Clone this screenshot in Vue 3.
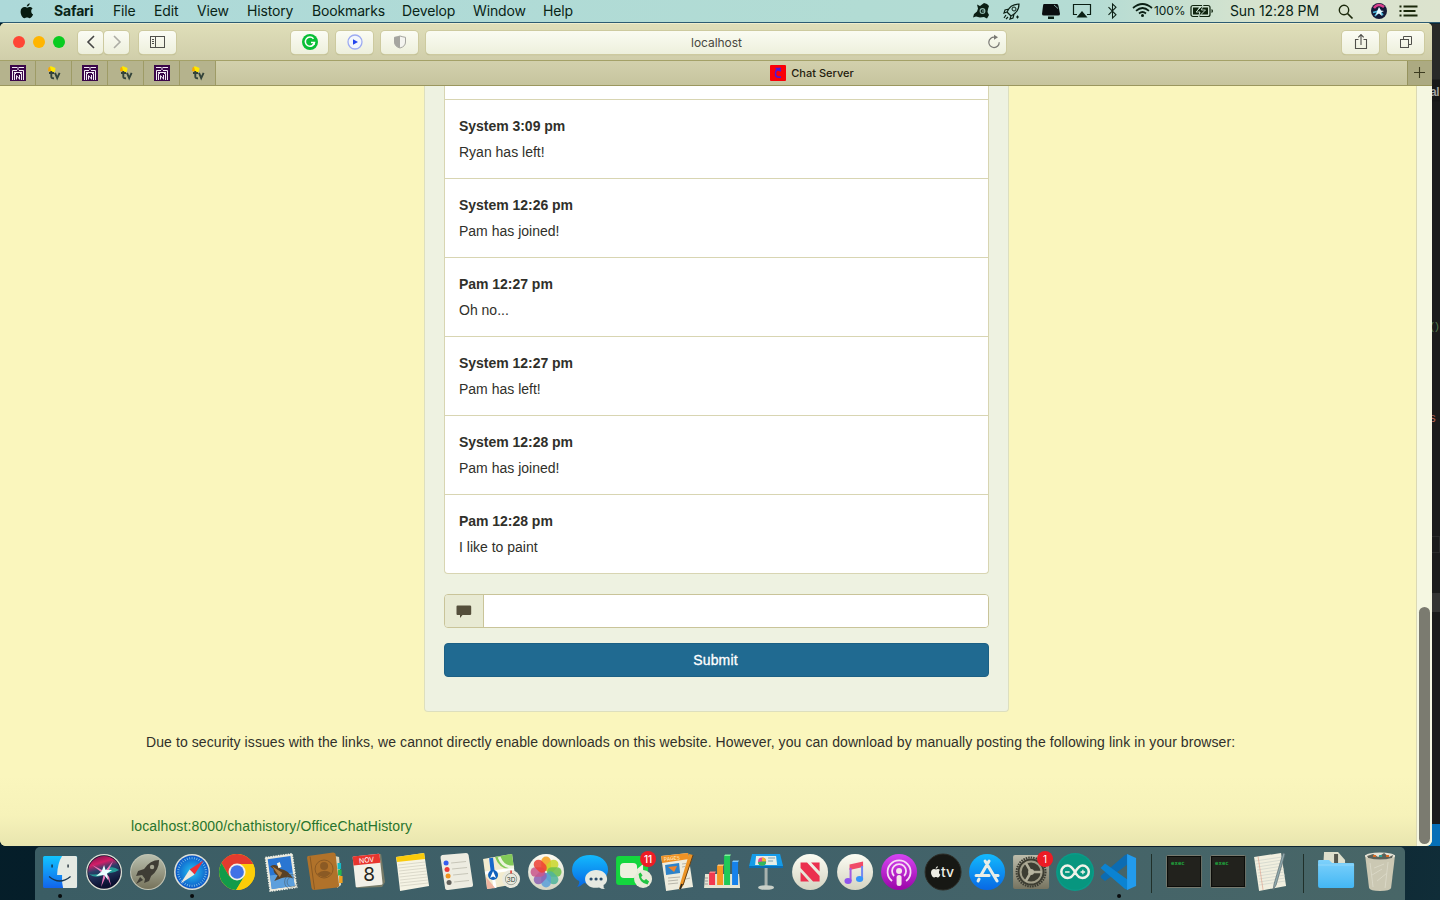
<script setup>
const menus = [
  { label: 'Safari', slot: 59, bold: true },
  { label: 'File', slot: 41 },
  { label: 'Edit', slot: 43 },
  { label: 'View', slot: 50 },
  { label: 'History', slot: 65 },
  { label: 'Bookmarks', slot: 90 },
  { label: 'Develop', slot: 71 },
  { label: 'Window', slot: 70 },
  { label: 'Help', slot: 50 },
]
const messages = [
  { who: 'System', time: '3:09 pm', text: 'Ryan has left!' },
  { who: 'System', time: '12:26 pm', text: 'Pam has joined!' },
  { who: 'Pam', time: '12:27 pm', text: 'Oh no...' },
  { who: 'System', time: '12:27 pm', text: 'Pam has left!' },
  { who: 'System', time: '12:28 pm', text: 'Pam has joined!' },
  { who: 'Pam', time: '12:28 pm', text: 'I like to paint' },
]
const pins = ['maze', 'tv', 'maze', 'tv', 'maze', 'tv']
const petals = ['#f5a01c', '#c9d62b', '#6cc04a', '#4fb59b', '#5c9fd8', '#8d62b5', '#c9578c', '#ee4136']
const ticks = Array.from({ length: 36 }, (_, i) => i * 10)
</script>

<template>
  <div class="desktop">
    <header class="menubar">
      <svg class="apple" width="14" height="16" viewBox="0 0 14 16"><path d="M9.700.200C9.800 1.800 8.400 3.600 6.800 3.600 6.600 2 8.100.400 9.700.200ZM11.200 7.900C11.200 6.400 12.300 5.600 12.600 5.400 11.700 4.200 10.500 4 9.900 4 8.700 4 7.800 4.700 7.200 4.700 6.600 4.700 5.700 4.100 4.600 4.100 2.500 4.100.6 5.700.6 8.700.6 11.800 2.700 15.200 4.500 15.200 5.400 15.200 5.900 14.600 7.100 14.600 8.300 14.600 8.600 15.200 9.600 15.200 11.200 15.200 12.700 12.800 13.100 11.300 12 10.900 11.200 9.600 11.200 7.900Z" fill="#071b10"/></svg>
      <nav class="menus">
        <span v-for="m in menus" :key="m.label" :class="{ bold: m.bold }" :style="{ width: m.slot + 'px' }">{{ m.label }}</span>
      </nav>
      <svg class="tray" width="240" height="22" viewBox="0 0 240 22" fill="none" stroke="#0b1f14">
        <!-- cat-shaped utility, rocket, display -->
        <path d="M8 4.500 11 6 15 3 18 4 20 6 19 9 18.500 12 20 15 18 18.500 15 17 11 17.500 7 16.500 4 17.500 5 14 8 11.500 9 8.500Z" fill="#0b1f14" stroke="none"/>
        <circle cx="13.500" cy="11" r="2.400" stroke="#8fb8ae" stroke-width="1.100"/><path d="M13 11h3" stroke="#8fb8ae"/>
        <g transform="translate(34 3)"><path d="M4 9C6 4 10 1 16 1 16 7 12 11 8 13ZM6 6 2 7 1 10 4 9M11 11 10 15 7 16 8 13M3 12 1 15M5 14 3 16" stroke-width="1.200"/><circle cx="11" cy="6" r="2"/></g>
        <path d="M48.500 15.500v3M47 17h3"/>
        <path d="M75 4H88Q89 4 89.500 6L91 14Q91 15.500 89 15.500H75Q73 15.500 73 14L74 6Q74 4 75 4Z" fill="#0b0e10" stroke="none"/><path d="M79 16.500H85V19H79Z" fill="#0b1f14" stroke="none"/><path d="M85 5 89 8.500" stroke="#86aaa5"/>
        <path d="M108 14.500H104.500V4.500H121.500V14.500H118" stroke-width="1.200"/><path d="M113 11 118.500 17.500H107.500Z" fill="#0b1f14" stroke="none"/>
        <path d="M139.500 7.200 147 14.800 143.500 18V4L147 7.200 139.500 14.800" stroke-width="1.050"/>
        <g stroke-width="1.700"><path d="M164 8Q173.500 0 183 8M167 10.800Q173.500 5.200 180 10.800M170 13.500Q173.500 10.500 177 13.500"/></g><circle cx="173.500" cy="15.500" r="1.500" fill="#0b1f14" stroke="none"/>
      </svg>
      <span class="percent">100%</span>
      <svg class="battery" width="24" height="14" viewBox="0 0 24 14"><rect x="1" y="1.500" width="19" height="11" rx="2" fill="none" stroke="#10240f" stroke-width="1.200"/><path d="M3 3.500H9L6 8H9V10.500H3ZM12 3.500H18V10.500H11L15 6H12Z" fill="#10240f"/><path d="M13 1 6 8H10L8.500 13 15.500 6H11.500Z" fill="#10240f" stroke="#c8dfd0" stroke-width=".9"/><path d="M21.500 5V9Q23 8.500 23 7T21.500 5" fill="#10240f"/></svg>
      <span class="clock">Sun 12:28 PM</span>
      <svg class="right-tray" width="90" height="22" viewBox="0 0 90 22" fill="none" stroke="#1b280b">
        <circle cx="14" cy="10" r="4.700" stroke-width="1.400"/><path d="M17.500 13.500 22.500 18.500" stroke-width="1.700"/>
        <circle cx="49" cy="11" r="8" fill="#141a38" stroke="none"/><path d="M44 8Q48 2.500 54 7" stroke="#d8408c" stroke-width="2.500"/><path d="M43 12.500 49 11 45 16M49 11 53 15" stroke="#49b9dc" stroke-width="1.800"/><path d="M49 7 51 10.500 54 11 51 12.500 52 16 49 13.500 46 15 47 11.500Z" fill="#e5faff" stroke="none"/>
        <g stroke-width="1.800"><path d="M73.500 6.500H87.500M73.500 11H85.500M73.500 15.500H87.500"/><path d="M69.500 6.500h2M69.500 11h2M69.500 15.500h2"/></g>
      </svg>
    </header>

    <div class="editor">
      <span class="ed-tab">al</span><span class="ed-par">()</span><span class="ed-s">s</span>
      <i class="ed-line"></i><i class="ed-bar"></i><i class="ed-foot"></i>
    </div>

    <main class="window">
      <div class="toolbar">
        <div class="lights"><i class="red"></i><i class="amber"></i><i class="green"></i></div>
        <div class="btn nav-l"><svg width="24" height="22" viewBox="0 0 24 22"><path d="M15 5 9 11 15 17" fill="none" stroke="#454545" stroke-width="1.600"/></svg></div>
        <div class="btn nav-r"><svg width="24" height="22" viewBox="0 0 24 22"><path d="M9 5 15 11 9 17" fill="none" stroke="#adada5" stroke-width="1.600"/></svg></div>
        <div class="btn side"><svg width="18" height="14" viewBox="0 0 18 14" fill="none" stroke="#50504b"><rect x="1.500" y="1.500" width="14" height="11"/><path d="M6.500 1.500V12.500M3 4.500h2M3 6.500h2M3 8.500h2"/></svg></div>
        <div class="btn gram"><svg width="18" height="18" viewBox="0 0 18 18"><circle cx="9" cy="9" r="8" fill="#08bf36"/><path d="M12.500 5.700A4.600 4.600 0 1 0 13.500 9.500H10" fill="none" stroke="#fff" stroke-width="1.500"/><path d="M11 11.500 13.600 9.200V12" fill="#fff"/></svg></div>
        <div class="btn play"><svg width="18" height="18" viewBox="0 0 18 18"><circle cx="9" cy="9" r="7" fill="#f2f6fb" stroke="#9dabf2" stroke-width="1.300"/><path d="M7 6.200 12 9 7 11.800Z" fill="#2344ed"/></svg></div>
        <div class="btn shield"><svg width="14" height="16" viewBox="0 0 14 16"><path d="M7 2Q10 3 12.500 3.300V8Q12.500 12.500 7 14Q1.500 12.500 1.500 8V3.300Q4 3 7 2Z" fill="#f4f4f0" stroke="#a5a5a0"/><path d="M7 2Q4 3 1.500 3.300V8Q1.500 12.500 7 14Z" fill="#a5a5a0"/></svg></div>
        <div class="address"><span>localhost</span><svg width="16" height="16" viewBox="0 0 16 16"><path d="M8.500 3.200A5.200 5.200 0 1 0 13.200 8.200" fill="none" stroke="#797974" stroke-width="1.200"/><path d="M8 .800 12 3.300 8 5.800Z" fill="#797974"/></svg></div>
        <div class="btn share"><svg width="14" height="18" viewBox="0 0 14 18" fill="none" stroke="#50504b" stroke-width="1.100"><path d="M4.500 6.500H1.500V15.500H12.500V6.500H9.500M7 12V1.500M4.300 4.300 7 1.500 9.700 4.300"/></svg></div>
        <div class="btn tabs"><svg width="14" height="14" viewBox="0 0 14 14" fill="none" stroke="#50504b"><rect x="1.500" y="4.500" width="8" height="8"/><path d="M4.500 4V1.500H12.500V9.500H10"/></svg></div>
      </div>
      <div class="tabbar">
        <div v-for="(p, i) in pins" :key="i" class="pin">
          <svg v-if="p === 'maze'" width="16" height="16" viewBox="0 0 16 16"><rect width="16" height="16" fill="#3a064a"/><path d="M2 2.500H7M9 2.500H14M8 2V5M2.500 15V5.500H7M13.500 15V5.500H9M4.500 15V8.500H6M11.500 15V8.500H10M4 7.500H12M6.500 14.500V10.500M6.500 10.500 9.500 14M9.500 10V14.500" fill="none" stroke="#f2eaf4"/></svg>
          <svg v-else class="tvfav" width="16" height="18" viewBox="0 0 16 18"><path d="M4.500 2 9.500 4 9 7.500 6 8.500 3 6Z" fill="#ffe800"/><path d="M2.500 3.500 4 3 5.500 8 2 7Z" fill="#f7a900"/><path d="M5.300 7V12.500Q5.300 14.700 8 14.200M3 9H8M9 8.800 11.200 14.200 13.600 8.800" fill="none" stroke="#34443b" stroke-width="1.900"/></svg>
        </div>
        <div class="active-tab">
          <svg width="16" height="16" viewBox="0 0 16 16"><rect width="16" height="16" rx="1" fill="#fa0008"/><path d="M11 6Q6 3 5.500 8T11 12M5.500 3.500H11" fill="none" stroke="#4c18d8" stroke-width="1.600"/></svg>
          <span>Chat Server</span>
        </div>
        <div class="plus"><svg width="12" height="12" viewBox="0 0 12 12"><path d="M5.500 0V11M0 5.500H11" stroke="#3c3b20" stroke-width="1.100"/></svg></div>
      </div>
      <div class="viewport">
        <section class="page">
          <div class="well">
            <ul class="list">
              <li class="cut"></li>
              <li v-for="(m, i) in messages" :key="i"><h4>{{ m.who }} {{ m.time }}</h4><p>{{ m.text }}</p></li>
            </ul>
            <div class="field">
              <div class="addon"><svg width="16" height="14" viewBox="0 0 16 14"><path d="M1.500.500H14Q15.200.500 15.200 1.500V9Q15.200 10 14 10H6.500L4 13V10H1.500Q.500 10 .500 9V1.500Q.500.500 1.500.500Z" fill="#554f3b"/></svg></div>
              <div class="input"></div>
            </div>
            <button class="submit">Submit</button>
          </div>
          <p class="note">Due to security issues with the links, we cannot directly enable downloads on this website. However, you can download by manually posting the following link in your browser:</p>
          <p class="link">localhost:8000/chathistory/OfficeChatHistory</p>
        </section>
        <div class="track"><i></i></div>
      </div>
    </main>

    <footer class="dock">
      <svg width="0" height="0" class="defs">
        <defs>
          <linearGradient id="finder" x2="0" y2="1"><stop stop-color="#12c5ff"/><stop offset="1" stop-color="#1264ec"/></linearGradient>
          <linearGradient id="ivory" x2="0" y2="1"><stop stop-color="#fcfcf3"/><stop offset="1" stop-color="#d5d4c2"/></linearGradient>
          <linearGradient id="rock" x2="0" y2="1"><stop stop-color="#b9bfae"/><stop offset="1" stop-color="#76735b"/></linearGradient>
          <linearGradient id="blue" x2="0" y2="1"><stop stop-color="#13bafd"/><stop offset="1" stop-color="#0868e5"/></linearGradient>
          <radialGradient id="compass"><stop stop-color="#27c4f2"/><stop offset="1" stop-color="#0b58c8"/></radialGradient>
          <linearGradient id="siri" x2=".3" y2="1"><stop stop-color="#6c1145"/><stop offset=".3" stop-color="#d31e68"/><stop offset=".5" stop-color="#2b3f6a"/><stop offset="1" stop-color="#0a1030"/></linearGradient>
          <linearGradient id="purple" x2="0" y2="1"><stop stop-color="#d645f2"/><stop offset="1" stop-color="#9b05a8"/></linearGradient>
          <linearGradient id="metal" x2="0" y2="1"><stop stop-color="#bcbcab"/><stop offset="1" stop-color="#777460"/></linearGradient>
          <linearGradient id="folder" x2="0" y2="1"><stop stop-color="#7ed1fb"/><stop offset="1" stop-color="#43b7f4"/></linearGradient>
        </defs>
      </svg>
      <!-- Finder -->
      <svg class="app" viewBox="0 0 44 44"><rect x="5" y="6" width="34" height="32" rx="1.500" fill="url(#finder)"/><path d="M24 6H37.500Q39 6 39 7.500V36.500Q39 38 37.500 38H25Q23.500 32 24 25H19Q19.500 13 24 6Z" fill="#e5eae3"/><path d="M14 14.500v3M30 14.500v3" stroke="#15252e" stroke-width="1.300"/><path d="M11 26.500Q21.500 35.500 32.500 26.500" fill="none" stroke="#17344d" stroke-width="1.300"/><circle cx="22" cy="46" r="2" fill="#080c0d"/></svg>
      <!-- Siri -->
      <svg class="app" viewBox="0 0 44 44"><circle cx="22" cy="22" r="18" fill="#dce0d5"/><circle cx="22" cy="22" r="16.700" fill="#100d2b"/><circle cx="22" cy="22" r="16" fill="url(#siri)"/><path d="M7 24Q16 26 22 21Q29 14 37 20Q31 24 24 23Q14 30 7 24Z" fill="#26c6b0" opacity=".7"/><path d="M22 22 19 37 23 28ZM23 22 29 36 27 27ZM22 21 10 15 19 22ZM23 21 31 11 26 22Z" fill="#f07ebc"/><path d="M22 15 23.500 20 30 20 25 23.500 26 30 22 25 14 26 19.500 21.500Z" fill="#eaffff"/></svg>
      <!-- Launchpad -->
      <svg class="app" viewBox="0 0 44 44"><circle cx="22" cy="22" r="18" fill="#c3c5b5"/><circle cx="22" cy="22" r="17" fill="url(#rock)"/><path d="M33 10Q24 10 18 19L12 21 10 26 16 25 19 29 18 33 23 31 25 26Q33 20 33 10ZM14 27 10 34 17 30Z" fill="#3f3d35"/><circle cx="26" cy="17" r="2.200" fill="#a4a491"/></svg>
      <!-- Safari -->
      <svg class="app" viewBox="0 0 44 44"><circle cx="22" cy="22" r="18" fill="#e0e1d7"/><circle cx="22" cy="22" r="16.500" fill="url(#compass)"/><g stroke="#a4d9ef" stroke-width=".6"><path v-for="t in ticks" :key="t" d="M22 7v2.200" :transform="`rotate(${t} 22 22)`"/></g><path d="M33.500 10.500 19.500 19.500 24.500 24.500Z" fill="#ee2f36"/><path d="M10.500 33.500 19.500 19.500 24.500 24.500Z" fill="#ede9df"/><circle cx="22" cy="46" r="2" fill="#080c0d"/></svg>
      <!-- Chrome -->
      <svg class="app" viewBox="0 0 44 44"><circle cx="22" cy="22" r="18" fill="#fccd08"/><path d="M22 22 38 14A18 18 0 0 0 6.400 13L14 26Z" fill="#e33b2e"/><path d="M6.400 13A18 18 0 0 0 21 40L29.500 26 22 30 14 26Z" fill="#129b4a"/><path d="M22 14H38A18 18 0 0 1 21 40L29.500 26Z" fill="#fccd08"/><circle cx="22" cy="22" r="8.500" fill="#f3f1e8"/><circle cx="22" cy="22" r="6.800" fill="#4072e6"/></svg>
      <!-- Mail -->
      <svg class="app" viewBox="0 0 44 44"><g transform="rotate(-8 22 22)"><rect x="8.500" y="5.500" width="27" height="34" fill="#e9e8d9" stroke="#f4f3e9" stroke-dasharray="1.500 1" stroke-width="1.500"/><rect x="10.500" y="7.500" width="23" height="30" fill="#2a76d2"/><path d="M10.500 24H33.500V37.500H10.500Z" fill="#5c9fdc"/><path d="M12 15Q18 12 22 19Q29 21 33 30Q28 27 22 28L14 30 18 25Q14 22 15 18Z" fill="#584025"/><path d="M14 15 23 23 20 27Z" fill="#ae7d42"/><path d="M19 13 22 12 23 17 20 18Z" fill="#fff8df"/></g><g fill="none" stroke="#4b5c66" opacity=".55"><circle cx="33" cy="32" r="7.500"/><circle cx="33" cy="32" r="5"/></g></svg>
      <!-- Contacts -->
      <svg class="app" viewBox="0 0 44 44"><path d="M32 6 36 7 38 35 34 38Z" fill="#d9d6be"/><path d="M34.500 13h3.500v6h-3.500Z" fill="#16b9c5"/><path d="M35 19.500h3.500v6H35Z" fill="#26b64c"/><path d="M36 26h3.500v7H36Z" fill="#f1a01e"/><path d="M5 6 30 2.500Q32 2.500 32.500 4L36 35.500Q36 37 34 37.500L11 40Q9 40 8.500 38L4 8Q4 6 5 6Z" fill="#b0722a"/><path d="M7 6.500 11.500 39.500" stroke="#8b5a22"/><circle cx="21" cy="19" r="9" fill="none" stroke="#8b5a24"/><circle cx="21" cy="16" r="4" fill="#8b5a24"/><path d="M14 24Q21 18 28 23Q21 31 14 24Z" fill="#8b5a24"/></svg>
      <!-- Calendar -->
      <svg class="app" viewBox="0 0 44 44"><path d="M8 9 34 4 38 32 35 37 10 38Z" fill="#777b68"/><g transform="rotate(-6 21 20)"><rect x="7" y="5" width="27" height="31" rx="1" fill="#f2f0e7"/><rect x="7" y="5" width="27" height="9" fill="#e8352e"/><text x="20.500" y="12.500" font-size="7" fill="#fff" text-anchor="middle">NOV</text></g><text x="22" y="30.500" font-size="19" fill="#262620" text-anchor="middle">8</text></svg>
      <!-- Notes -->
      <svg class="app" viewBox="0 0 44 44"><path d="M5 7 33 3 38 36 9 41Z" fill="#f5f3e4"/><path d="M5 7 33 3 34 9 6 12Z" fill="#facb0b"/><path d="M7 15 34 12M7.500 18 34.500 15M8 21 35 18M8 24 35.500 21M8.500 27 36 24M9 30 36.500 27M9 33 37 30M9.500 36 37 33" stroke="#c9c7b8" stroke-width=".6"/></svg>
      <!-- Reminders -->
      <svg class="app" viewBox="0 0 44 44"><path d="M7 5 31 3Q33 3 33.500 5L38 35Q38 37 36 37L13 40Q10 40 10 38L5.500 8Q5 6 7 5Z" fill="#edece1"/><g stroke="#bdbbad" stroke-width=".8"><path d="M16 13 31 11.500M17 19 32 17.500M18 25 33 23.500M19 32 34 30.500"/></g><circle cx="11" cy="13" r="2.500" fill="#365cf0"/><circle cx="12" cy="19.500" r="2.500" fill="#ed3a38"/><circle cx="13" cy="26" r="2.500" fill="#ef941e"/><circle cx="14" cy="32.500" r="2.500" fill="#62615c"/></svg>
      <!-- Maps -->
      <svg class="app" viewBox="0 0 44 44"><path d="M4 9 33 4 37 34 8 39Z" fill="#f2ebce"/><path d="M16 7 33 4 35 20Q20 20 16 7Z" fill="#82ca58"/><path d="M11 8 16 38M6 23 35 19" stroke="#fff" stroke-width="3"/><path d="M7 27 16 38 8 39Z" fill="#efb4a0"/><path d="M12 8 14 25" stroke="#1768ca" stroke-width="4"/><path d="M20 7Q24 18 35 17" stroke="#edf4de" stroke-width="3" fill="none"/><circle cx="14" cy="25" r="5" fill="#0f61bc"/><path d="M14 21 17 28 14 26.500 11 28Z" fill="#fff"/><circle cx="32" cy="29" r="9" fill="#e9e9dd"/><circle cx="32" cy="29" r="5.700" fill="none" stroke="#9fa69b"/><text x="32" y="31.500" font-size="6.500" text-anchor="middle" fill="#31433b">3D</text><path d="M32 20.500v3" stroke="#e03428" stroke-width="1.500"/></svg>
      <!-- Photos -->
      <svg class="app" viewBox="0 0 44 44"><circle cx="22" cy="22" r="18" fill="url(#ivory)"/><rect v-for="(c, i) in petals" :key="c" x="17.200" y="6.500" width="9.600" height="14.500" rx="4.800" :fill="c" opacity=".86" :transform="`rotate(${i * 45} 22 22)`"/></svg>
      <!-- Messages -->
      <svg class="app" viewBox="0 0 44 44"><path d="M22 5C32 5 40 11 40 19.500S32 34 22 34Q19 34 16 33Q13 36 9 37Q12 33 11 31C7 29 4 25 4 20 4 11 12 5 22 5Z" fill="url(#blue)"/><path d="M28 20C35 20 39 24 39 29Q39 33 35.500 35Q35 38 37 39Q33 39 31 37.500C23 39 17 35 17 29 17 24 22 20 28 20Z" fill="#e6eae2"/><g fill="#284c6b"><circle cx="23" cy="29" r="1.600"/><circle cx="28" cy="29" r="1.600"/><circle cx="33" cy="29" r="1.600"/></g></svg>
      <!-- FaceTime -->
      <svg class="app" viewBox="0 0 44 44"><rect x="4" y="6" width="32" height="29" rx="3" fill="#14d63e"/><rect x="8" y="13" width="17" height="15" rx="4" fill="#eef0de"/><path d="M25 19 31 14V28H25Z" fill="#eef0de"/><circle cx="31" cy="29" r="9" fill="#e8ead9"/><path d="M26.500 24Q27 33 35.500 34.500L37 31.500 34 29 32 30.500Q29.500 29 29 27L30.500 25.500 28.500 22.500Z" fill="#21c443"/><circle cx="36" cy="9" r="8" fill="#ed1c25"/><text x="36" y="12.700" font-size="10" font-weight="500" fill="#fff" text-anchor="middle">11</text></svg>
      <!-- Pages -->
      <svg class="app" viewBox="0 0 44 44"><path d="M5 6 32 3 37 37 10 41Z" fill="#eeecdd"/><path d="M5 6 32 3 33 9 6 13Z" fill="#ef9224"/><text x="8" y="11" font-size="5" fill="#fff2d0" transform="rotate(-6 8 11)">PAGES</text><path d="M9 15 23 13 24 23 10 25Z" fill="#2e83c9"/><path d="M12 17 21 16 18 22Z" fill="#ef832b"/><path d="M26 14 30 13.500M26 17 29 16.500M12 28 24 27M12 31 22 30M12 34 22 33M30 29 34 28" stroke="#b8b6aa"/><path d="M33 4 37 5 27 36 23 40 24 34Z" fill="#ec9426"/><path d="M26 34 24 39" stroke="#2f2b20" stroke-width="2"/><path d="M37 5 27 35" stroke="#654015"/></svg>
      <!-- Numbers -->
      <svg class="app" viewBox="0 0 44 44"><path d="M5 24H39L40 38H4Z" fill="#e6e5d4"/><path d="M5 28 8 28M5 31 8 31M4.500 34 8 34" stroke="#999"/><path d="M9 23h6v12H9Z" fill="#f2394f"/><path d="M17 16h6v19h-6Z" fill="#f69722"/><path d="M24 6h6v29h-6Z" fill="#20c957"/><path d="M32 12h6v23h-6Z" fill="#1782eb"/><path d="M9 23l1-1.500h6l-1 1.500Z" fill="#ff7e83"/><path d="M17 16l1-1.500h6l-1 1.500Z" fill="#ffc477"/><path d="M24 6l1-1.500h6l-1 1.500Z" fill="#7ff09b"/><path d="M32 12l1-1.500h6l-1 1.500Z" fill="#7bc8ff"/></svg>
      <!-- Keynote -->
      <svg class="app" viewBox="0 0 44 44"><path d="M20.500 17h3v21h-3Z" fill="#a8b2ae"/><ellipse cx="22" cy="37.500" rx="8" ry="2.300" fill="#c9d0c8"/><path d="M8 4H36L39 16H5Z" fill="#159be8"/><path d="M5 16H39V18H5Z" fill="#0b6eb5"/><path d="M12 6H32L33 15H11Z" fill="#e6eee7"/><circle cx="18" cy="11.500" r="4" fill="#e6489b"/><path d="M18 7.500A4 4 0 0 1 22 11.500H18Z" fill="#efb628"/><path d="M18 11.500H22A4 4 0 0 1 14 12Z" fill="#32b75b"/><path d="M24 8h7M24 11h5" stroke="#799eb0"/></svg>
      <!-- News -->
      <svg class="app" viewBox="0 0 44 44"><circle cx="22" cy="22" r="18" fill="url(#ivory)"/><path d="M12.500 12.500H19L31.500 26V31.500H25L12.500 18ZM23 12.500H31.500V21.500ZM12.500 22 21 31.500H12.500Z" fill="#eb304e"/></svg>
      <!-- Music -->
      <svg class="app" viewBox="0 0 44 44"><circle cx="22" cy="22" r="18" fill="url(#ivory)"/><path d="M16.500 14.500 30 11.500V17L16.500 20Z" fill="#f04b68"/><path d="M17.500 18V31" stroke="#a55ae0" stroke-width="2"/><path d="M29 16V29" stroke="#7388f0" stroke-width="2"/><ellipse cx="15" cy="31" rx="3.600" ry="3" fill="#8f53ee"/><ellipse cx="26.500" cy="29" rx="3.600" ry="3" fill="#3595fa"/></svg>
      <!-- Podcasts -->
      <svg class="app" viewBox="0 0 44 44"><circle cx="22" cy="22" r="18" fill="url(#purple)"/><g fill="none" stroke="#f7def4" stroke-width="1.800"><path d="M15 31A11.500 11.500 0 1 1 29 31M17 26A7 7 0 1 1 27 26"/></g><circle cx="22" cy="21" r="3" fill="#f4e6e9"/><rect x="19.500" y="25" width="5" height="11" rx="2.500" fill="#f4e6e9"/></svg>
      <!-- Apple TV -->
      <svg class="app" viewBox="0 0 44 44"><circle cx="22" cy="22" r="18" fill="#171814" stroke="#2d2d27"/><g transform="translate(9.500 16) scale(.75)"><path d="M9.700.200C9.800 1.800 8.400 3.600 6.800 3.600 6.600 2 8.100.400 9.700.200ZM11.200 7.900C11.200 6.400 12.300 5.600 12.600 5.400 11.700 4.200 10.500 4 9.900 4 8.700 4 7.800 4.700 7.200 4.700 6.600 4.700 5.700 4.100 4.600 4.100 2.500 4.100.6 5.700.6 8.700.6 11.800 2.700 15.200 4.500 15.200 5.400 15.200 5.900 14.600 7.100 14.600 8.300 14.600 8.600 15.200 9.600 15.200 11.200 15.200 12.700 12.800 13.100 11.300 12 10.900 11.200 9.600 11.200 7.900Z" fill="#eeeee5"/></g><text x="20" y="27" font-size="14" font-weight="500" fill="#eeeee5">tv</text></svg>
      <!-- App Store -->
      <svg class="app" viewBox="0 0 44 44"><circle cx="22" cy="22" r="18" fill="url(#blue)"/><g stroke="#e9eee8" stroke-width="3" stroke-linecap="round"><path d="M24 11 16 25M20 11 32 31M11 25.500H24M29 25.500H33M14 29 13 31"/></g></svg>
      <!-- System Preferences -->
      <svg class="app" viewBox="0 0 44 44"><rect x="4" y="5" width="36" height="34" rx="2" fill="url(#metal)"/><circle cx="22" cy="22" r="14.500" fill="none" stroke="#393a31" stroke-width="2" stroke-dasharray="1.500 1"/><circle cx="22" cy="22" r="13.500" fill="#3d3d32"/><circle cx="22" cy="22" r="10.500" fill="none" stroke="#a09d88" stroke-width="2"/><path d="M22 22H33M22 22 16.500 12.500M22 22 16.500 31.500" stroke="#b0ad98" stroke-width="2.500"/><circle cx="22" cy="22" r="3" fill="#b8b5a0"/><circle cx="36" cy="9" r="8" fill="#ed1c25"/><text x="36" y="12.500" font-size="10" fill="#fff" text-anchor="middle">1</text></svg>
      <!-- Arduino -->
      <svg class="app" viewBox="0 0 44 44"><circle cx="22" cy="22" r="19" fill="#0a9b88"/><circle cx="22" cy="22" r="17.500" fill="#07967f"/><path d="M22 22C19 17 16 15.500 14.500 15.500A6 6 0 0 0 14.500 28C17 28 20 26 22 22 25 17 28 15.500 29.500 15.500A6 6 0 0 1 29.500 28C27 28 24 26 22 22Z" fill="none" stroke="#f0f2e9" stroke-width="2.500"/><path d="M12 22h4.500M27.500 22h4.500M29.800 19.700v4.600" stroke="#f0f2e9" stroke-width="1.300"/></svg>
      <!-- VS Code -->
      <svg class="app" viewBox="0 0 44 44"><path d="M4 28 3.500 26 28 5 31 4V14L8 31Z" fill="#0c6cb2"/><path d="M3.500 18 8 13.500 31 30V40L28 39Z" fill="#0b83d2"/><path d="M30 4 39 8V36L30 40Z" fill="#229bed"/><circle cx="22" cy="46" r="2" fill="#080c0d"/></svg>
      <i class="sep"></i>
      <svg v-for="n in 2" :key="n" class="app" viewBox="0 0 44 44"><rect x="4.500" y="5.500" width="35" height="32" rx="1" fill="#22221d" stroke="#777b70"/><rect x="5.500" y="6.500" width="33" height="30" fill="none" stroke="#0b0c09"/><text x="9" y="14.500" font-size="5.700" font-weight="bold" fill="#20a33c" class="mono">exec</text></svg>
      <!-- TextEdit -->
      <svg class="app" viewBox="0 0 44 44"><path d="M4 7 31 3 36 36 9 41Z" fill="#f1efdf"/><path d="M5 11 32 7M6 14 32 10M7 17 33 13M7 20 33 16M8 23 34 19M8 26 34 22M9 29 35 25M9 32 35 28M9 35 35 31" stroke="#cdd3ca" stroke-width=".7"/><path d="M8 6.500 13 40" stroke="#dfa590" stroke-width=".7"/><path d="M33 3 35 4 26 35 23 40 24 34Z" fill="#8fa9ad" stroke="#5b6c70" stroke-width=".7"/></svg>
      <i class="sep"></i>
      <!-- Downloads -->
      <svg class="app" viewBox="0 0 44 44"><path d="M10 2H24L31 10V18H9Z" fill="#dedfcc"/><path d="M20 4h4v12h-4" fill="#55584e"/><path d="M4 11Q4 10 5 10H15L18 13H39Q40 13 40 14V36Q40 38 38 38H6Q4 38 4 36Z" fill="url(#folder)"/><path d="M4 15H40" stroke="#a1dcf9" stroke-width=".7"/></svg>
      <!-- Trash -->
      <svg class="app" viewBox="0 0 44 44"><path d="M7 5 37 5 33 38Q32 41 22 41T11 38Z" fill="#cbc8b3"/><ellipse cx="22" cy="6" rx="15" ry="3.500" fill="#e5e3d6"/><path d="M9 6 15 4 20 7 26 3 31 7 35 5 34 8Q22 11 10 8Z" fill="#5c6259"/><path d="M15 6h3M28 6h3" stroke="#d96b24" stroke-width="2"/><path d="M21 6h3" stroke="#2e9d91" stroke-width="2"/><path d="M12 13 15 37M30 12 27 38M16 18 26 14M14 25 24 19M19 31 29 23" stroke="#dedccb" opacity=".8"/></svg>
    </footer>
  </div>
</template>

<style>
html, body { margin: 0; overflow: hidden; }
</style>

<style scoped>
* { box-sizing: border-box; }
.desktop { position: relative; width: 1440px; height: 900px; overflow: hidden; background: linear-gradient(100deg, #041f2a, #0a1826 70%, #102d38); font-family: Inter, "Liberation Sans", sans-serif; }
.menubar { display: flex; align-items: center; height: 23px; background: linear-gradient(90deg, #add9d9, #b2dcd4 60%, #b5dcd4 76%, #d6e3ce 87%, #dce3ce); border-bottom: 1px solid #2c5b72; color: #092416; }
.apple { margin: 0 20px 1px 20px; flex: none; }
.menus { display: flex; font-size: 14px; line-height: 22px; letter-spacing: -.15px; white-space: nowrap; }
.menus span { flex: none; }
.menus .bold { font-weight: 700; }
.tray { margin-left: 376px; flex: none; }
.percent { font-size: 12px; width: 36px; margin: 0 0 2px -55px; flex: none; letter-spacing: -.1px; }
.battery { flex: none; margin-left: 0; }
.clock { font-size: 14px; width: 98px; margin: 0 0 2px 16px; white-space: nowrap; flex: none; letter-spacing: -.13px; }
.right-tray { margin-left: 2px; flex: none; }

.editor { position: absolute; top: 24px; right: 0; width: 12px; height: 822px; background: linear-gradient(#292a28 0 55px, #171817 56px 77px, #1b1c1b 78px); font: 12px "Liberation Mono", monospace; }
.editor span, .editor i { position: absolute; }
.ed-tab { top: 61px; left: 2px; color: #a4a5a3; font: bold 12px "Liberation Sans", sans-serif; letter-spacing: -.3px; }
.ed-par { top: 297px; left: 1px; color: #557b4d; letter-spacing: -2px; font-size: 11px; }
.ed-s { top: 388px; left: 1px; color: #b5685a; }
.ed-line { top: 512px; left: 0; width: 12px; height: 17px; border: 1px solid #2b2c2b; }
.ed-bar { top: 569px; left: 0; width: 12px; height: 19px; background: #343533; }
.ed-foot { bottom: 0; left: 0; width: 12px; height: 22px; background: #0670b7; }

.window { position: absolute; left: 0; top: 23px; width: 1432px; height: 823px; display: flex; flex-direction: column; border-radius: 5px 5px 6px 6px; overflow: hidden; background: #faf6bd; }
.toolbar { display: flex; align-items: center; height: 38px; padding-left: 13px; background: linear-gradient(#dfdeb9, #d0ceaa); border-top: 1px solid #efedcc; border-bottom: 1px solid #a4a168; }
.lights { display: flex; gap: 8px; width: 65px; }
.lights i { width: 12px; height: 12px; border-radius: 50%; }
.red { background: #ff4635; } .amber { background: #ffb500; } .green { background: #09cc20; }
.btn { display: flex; align-items: center; justify-content: center; height: 23px; flex: none; border-radius: 4px; background: linear-gradient(#fbfcf4, #edefdc); box-shadow: 0 0 0 1px #cdca9f, 0 1px 1px #a9a77d; width: 37px; }
.nav-l { width: 25px; } .nav-r { width: 25px; margin-left: 1px; }
.side { margin-left: 10px; } .gram { margin-left: 115px; } .play { margin-left: 8px; } .shield { margin-left: 8px; }
.address { position: relative; display: flex; align-items: center; justify-content: center; width: 580px; height: 23px; margin-left: 8px; border-radius: 4px; background: linear-gradient(#fafbf2, #edf0dc); box-shadow: 0 0 0 1px #cdca9f, 0 1px 1px #a3a178; font-size: 12px; color: #484740; letter-spacing: -.05px; padding-left: 1px; }
.address svg { position: absolute; right: 4px; top: 3px; }
.share { margin-left: 336px; } .tabs { margin-left: 8px; }
.tabbar { display: flex; height: 25px; background: linear-gradient(#d2d0ad, #c6c49e); border-bottom: 1px solid #9b975e; flex: none; }
.pin { width: 36px; display: flex; align-items: center; justify-content: center; background: #b5b38d; border-right: 1px solid #9e9b66; }
.active-tab { flex: 1; display: flex; align-items: center; justify-content: center; gap: 5px; padding-left: 1px; font-size: 11px; color: #24200e; font-weight: 500; }
.plus { width: 25px; display: flex; align-items: center; justify-content: center; background: #acaa82; border-left: 1px solid #96935e; }
.viewport { flex: 1; display: flex; overflow: hidden; }
.page { width: 1416px; height: 760px; flex: none; background: linear-gradient(#faf6bd 0 690px, #f6f2b9 730px, #e8e5af 760px); font: 14px/20px "Liberation Sans", Arial, sans-serif; color: #30302a; }
.well { width: 585px; height: 626px; margin-left: 424px; padding: 0 19px; background: #eef2e1; border: 1px solid #dddfbe; border-top: 0; border-radius: 0 0 4px 4px; }
.list { margin: 0; padding: 0; list-style: none; background: #fff; border: 1px solid #d8d5b2; border-top: 0; border-radius: 0 0 4px 4px; }
.list li { height: 79px; padding: 16px 14px 0; border-top: 1px solid #d8d5b2; }
.list .cut { height: 13px; border: 0; padding: 0; }
.list h4 { margin: 0 0 6px; font-size: 14px; line-height: 20px; font-weight: 700; letter-spacing: -.03px; }
.list p { margin: 0; }
.field { display: flex; height: 34px; margin-top: 20px; border: 1px solid #c9c499; border-radius: 4px; overflow: hidden; }
.addon { width: 39px; display: flex; align-items: center; justify-content: center; padding: 1px 1px 0 0; background: #e8ead3; border-right: 1px solid #c9c499; }
.input { flex: 1; background: #fff; }
.submit { display: block; width: 100%; height: 34px; margin-top: 15px; padding: 0 8px 0 6px; border: 1px solid #1c6084; border-radius: 4px; background: #206a91; color: #fff; font: 14px "Liberation Sans", Arial, sans-serif; letter-spacing: .15px; -webkit-text-stroke: .3px; }
.note { margin: 20px 0 0 146px; white-space: nowrap; letter-spacing: .084px; }
.link { margin: 64px 0 0 131px; color: #27742d; white-space: nowrap; letter-spacing: .135px; }
.track { flex: 1; background: #f5f7e1; border-left: 1px solid #dbd9b4; padding: 521px 2px 2px; }
.track i { display: block; width: 11px; height: 237px; border-radius: 6px; background: #7b7b70; }

.dock { position: absolute; left: 35px; top: 847px; width: 1370px; height: 53px; padding: 3px 2px 0 3px; display: flex; border-radius: 5px 5px 0 0; background: linear-gradient(90deg, #3b5d64, #40616a 50%, #486667); }
.defs { position: absolute; }
.app { width: 44.15px; height: 44px; flex: none; overflow: visible; font-family: Inter, sans-serif; }
.mono { font-family: "DejaVu Sans Mono", monospace; }
.sep { width: 20px; height: 39px; margin-top: 4px; flex: none; background: linear-gradient(90deg, transparent 9px, #20302a 9px 10px, transparent 10px); }
</style>
